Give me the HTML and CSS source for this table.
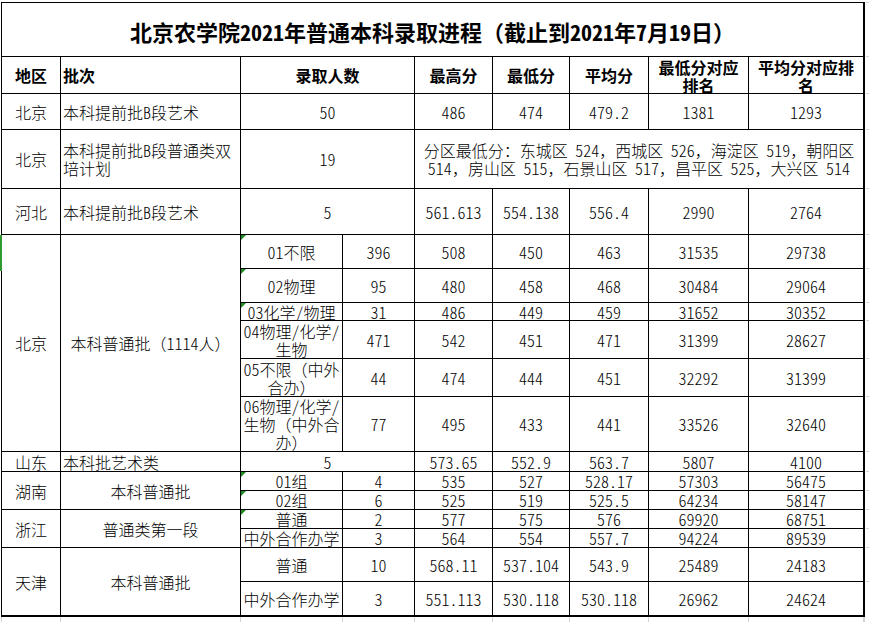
FILE: index.html
```html
<!DOCTYPE html>
<html lang="zh-CN">
<head>
<meta charset="utf-8">
<title>北京农学院2021年普通本科录取进程</title>
<link rel="stylesheet" href="styles.css">
</head>
<body>
<div class="sheet">
  <div class="main">
    <div class="grid">
      <div class="cell title span9"><span class="t">北京农学院<span class="n">2021</span>年普通本科录取进程（截止到<span class="n">2021</span>年<span class="n">7</span>月<span class="n">19</span>日）</span></div>

      <div class="cell hd">地区</div>
      <div class="cell hd l">批次</div>
      <div class="cell hd span2">录取人数</div>
      <div class="cell hd">最高分</div>
      <div class="cell hd">最低分</div>
      <div class="cell hd">平均分</div>
      <div class="cell hd two"><span class="t">最低分对应<br>排名</span></div>
      <div class="cell hd two"><span class="t">平均分对应排<br>名</span></div>

      <div class="cell">北京</div>
      <div class="cell l"><span class="t">本科提前批<span class="n">B</span>段艺术</span></div>
      <div class="cell n span2">50</div>
      <div class="cell n">486</div>
      <div class="cell n">474</div>
      <div class="cell n">479.2</div>
      <div class="cell n">1381</div>
      <div class="cell n">1293</div>

      <div class="cell">北京</div>
      <div class="cell l"><span class="t">本科提前批<span class="n">B</span>段普通类双<br>培计划</span></div>
      <div class="cell n span2">19</div>
      <div class="cell span5 note"><span class="t">分区最低分：东城区 <span class="n">524</span>，西城区 <span class="n">526</span>，海淀区 <span class="n">519</span>，朝阳区<br><span class="n">514</span>，房山区 <span class="n">515</span>，石景山区 <span class="n">517</span>，昌平区 <span class="n">525</span>，大兴区 <span class="n">514</span></span></div>

      <div class="cell">河北</div>
      <div class="cell l"><span class="t">本科提前批<span class="n">B</span>段艺术</span></div>
      <div class="cell n span2">5</div>
      <div class="cell n">561.613</div>
      <div class="cell n">554.138</div>
      <div class="cell n">556.4</div>
      <div class="cell n">2990</div>
      <div class="cell n">2764</div>

      <div class="cell rows6">北京</div>
      <div class="cell rows6"><span class="t">本科普通批（<span class="n">1114</span>人）</span></div>
      <div class="cell mark"><span class="t"><span class="n">01</span>不限</span></div>
      <div class="cell n">396</div>
      <div class="cell n">508</div>
      <div class="cell n">450</div>
      <div class="cell n">463</div>
      <div class="cell n">31535</div>
      <div class="cell n">29738</div>

      <div class="cell mark"><span class="t"><span class="n">02</span>物理</span></div>
      <div class="cell n">95</div>
      <div class="cell n">480</div>
      <div class="cell n">458</div>
      <div class="cell n">468</div>
      <div class="cell n">30484</div>
      <div class="cell n">29064</div>

      <div class="cell mark"><span class="t"><span class="n">03</span>化学<span class="n">/</span>物理</span></div>
      <div class="cell n">31</div>
      <div class="cell n">486</div>
      <div class="cell n">449</div>
      <div class="cell n">459</div>
      <div class="cell n">31652</div>
      <div class="cell n">30352</div>

      <div class="cell"><span class="t"><span class="n">04</span>物理<span class="n">/</span>化学<span class="n">/</span><br>生物</span></div>
      <div class="cell n">471</div>
      <div class="cell n">542</div>
      <div class="cell n">451</div>
      <div class="cell n">471</div>
      <div class="cell n">31399</div>
      <div class="cell n">28627</div>

      <div class="cell"><span class="t"><span class="n">05</span>不限（中外<br>合办）</span></div>
      <div class="cell n">44</div>
      <div class="cell n">474</div>
      <div class="cell n">444</div>
      <div class="cell n">451</div>
      <div class="cell n">32292</div>
      <div class="cell n">31399</div>

      <div class="cell"><span class="t"><span class="n">06</span>物理<span class="n">/</span>化学<span class="n">/</span><br>生物（中外合<br>办）</span></div>
      <div class="cell n">77</div>
      <div class="cell n">495</div>
      <div class="cell n">433</div>
      <div class="cell n">441</div>
      <div class="cell n">33526</div>
      <div class="cell n">32640</div>

      <div class="cell">山东</div>
      <div class="cell l">本科批艺术类</div>
      <div class="cell n span2">5</div>
      <div class="cell n">573.65</div>
      <div class="cell n">552.9</div>
      <div class="cell n">563.7</div>
      <div class="cell n">5807</div>
      <div class="cell n">4100</div>

      <div class="cell rows2">湖南</div>
      <div class="cell rows2">本科普通批</div>
      <div class="cell mark"><span class="t"><span class="n">01</span>组</span></div>
      <div class="cell n">4</div>
      <div class="cell n">535</div>
      <div class="cell n">527</div>
      <div class="cell n">528.17</div>
      <div class="cell n">57303</div>
      <div class="cell n">56475</div>

      <div class="cell mark"><span class="t"><span class="n">02</span>组</span></div>
      <div class="cell n">6</div>
      <div class="cell n">525</div>
      <div class="cell n">519</div>
      <div class="cell n">525.5</div>
      <div class="cell n">64234</div>
      <div class="cell n">58147</div>

      <div class="cell rows2">浙江</div>
      <div class="cell rows2">普通类第一段</div>
      <div class="cell mark">普通</div>
      <div class="cell n">2</div>
      <div class="cell n">577</div>
      <div class="cell n">575</div>
      <div class="cell n">576</div>
      <div class="cell n">69920</div>
      <div class="cell n">68751</div>

      <div class="cell">中外合作办学</div>
      <div class="cell n">3</div>
      <div class="cell n">564</div>
      <div class="cell n">554</div>
      <div class="cell n">557.7</div>
      <div class="cell n">94224</div>
      <div class="cell n">89539</div>

      <div class="cell rows2">天津</div>
      <div class="cell rows2">本科普通批</div>
      <div class="cell">普通</div>
      <div class="cell n">10</div>
      <div class="cell n">568.11</div>
      <div class="cell n">537.104</div>
      <div class="cell n">543.9</div>
      <div class="cell n">25489</div>
      <div class="cell n">24183</div>

      <div class="cell">中外合作办学</div>
      <div class="cell n">3</div>
      <div class="cell n">551.113</div>
      <div class="cell n">530.118</div>
      <div class="cell n">530.118</div>
      <div class="cell n">26962</div>
      <div class="cell n">24624</div>
    </div>
    <div class="below">
      <div></div><div></div><div></div><div></div><div></div><div></div><div></div><div></div><div></div>
    </div>
    <div class="selmark"></div>
  </div>
  <div class="side">
    <div></div><div></div><div></div><div></div><div></div><div></div><div></div><div></div><div></div>
    <div></div><div></div><div></div><div></div><div></div><div></div><div></div><div></div><div></div>
  </div>
</div>
</body>
</html>
```

FILE: styles.css
```css
html, body {
  margin: 0;
  padding: 0;
  background: #ffffff;
}

body {
  font-family: "Noto Sans CJK SC", "Noto Sans", sans-serif;
  font-size: 16px;
  font-weight: 300;
  color: #000;
  overflow: hidden;
}

.sheet {
  display: flex;
  align-items: flex-start;
  padding: 2px 0 0 1px;
}

.main {
  position: relative;
  display: flex;
  flex-direction: column;
}

.grid {
  display: grid;
  grid-template-columns: 58px 179px 101px 71px 77px 76px 78px 99px 114px;
  grid-template-rows: 53px 36px 35px 58px 45px 33px 33px 17px 37px 37px 54px 19px 18px 18px 18px 18px 33px 33px;
  gap: 1px;
  padding: 1px 2px 2px 1px;
  background: #000;
}

.cell {
  position: relative;
  background: #fff;
  display: flex;
  align-items: center;
  justify-content: center;
  text-align: center;
  line-height: 18px;
  overflow: hidden;
  white-space: nowrap;
}

.t {
  display: block;
}

.cell.l {
  justify-content: flex-start;
  text-align: left;
  padding-left: 2px;
}

.span2 { grid-column: span 2; }
.span5 { grid-column: span 5; }
.span9 { grid-column: span 9; }
.rows2 { grid-row: span 2; }
.rows6 { grid-row: span 6; }

.title {
  font-size: 22px;
  font-weight: 700;
  line-height: 26px;
  padding-top: 2px;
}

.hd {
  font-weight: 700;
}

.hd.two {
  align-items: flex-start;
  padding-top: 1px;
}

.n {
  font-feature-settings: "hwid" 1;
}

.note {
  word-spacing: 4px;
}

.mark::before {
  content: "";
  position: absolute;
  left: 0;
  top: 0;
  border-top: 5px solid #1f8a1f;
  border-right: 5px solid transparent;
}

.selmark {
  position: absolute;
  left: -1px;
  top: 233px;
  width: 2px;
  height: 36px;
  background: #2e9a2e;
}

.below {
  display: grid;
  grid-template-columns: 58px 179px 101px 71px 77px 76px 78px 99px 114px;
  gap: 1px;
  padding: 0 2px 0 1px;
  height: 8px;
  background: #d4d4d4;
}

.below > div {
  background: #fff;
}

.side {
  display: grid;
  grid-template-rows: 53px 36px 35px 58px 45px 33px 33px 17px 37px 37px 54px 19px 18px 18px 18px 18px 33px 33px;
  gap: 1px;
  padding-top: 1px;
  margin-left: 1px;
  width: 6px;
  background: #d4d4d4;
}

.side > div {
  background: #fff;
}
```
